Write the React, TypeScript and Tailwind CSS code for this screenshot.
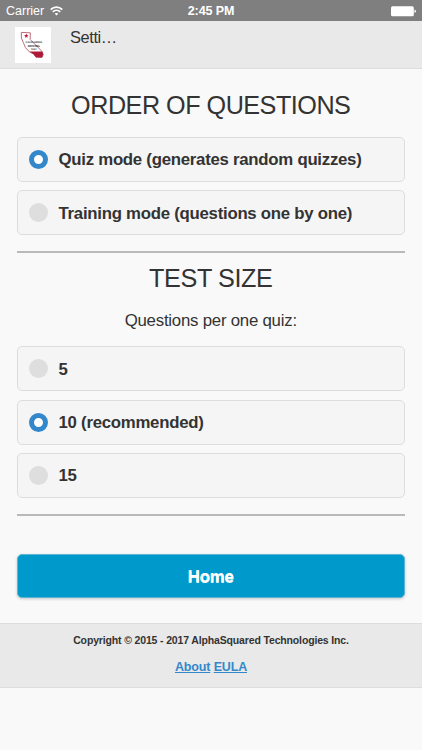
import React, { useState } from "react";

interface OptionProps {
  label: string;
  checked: boolean;
  onSelect: () => void;
}

function Option({ label, checked, onSelect }: OptionProps) {
  return (
    <button
      type="button"
      role="radio"
      aria-checked={checked}
      onClick={onSelect}
      className="flex h-[45px] w-full items-center gap-[11px] rounded-[5px] border border-[#dddddd] bg-[#f5f5f5] pl-[11px] text-left text-[16.8px] font-bold tracking-[-0.26px] whitespace-nowrap"
    >
      {checked ? (
        <span className="size-[19px] shrink-0 rounded-full border-[5.5px] border-[#3388cc] bg-white" />
      ) : (
        <span className="size-[19px] shrink-0 rounded-full bg-[#dedede]" />
      )}
      <span className="pt-px">{label}</span>
    </button>
  );
}

function StatusBar() {
  return (
    <div className="grid h-[21px] grid-cols-3 items-center bg-[#7f7f7f] text-[12.5px] text-white">
      <div className="flex items-center gap-[6px] pt-[2px] pl-[6px]">
        <span>Carrier</span>
        <svg className="-mt-[2px]" width="13" height="10" viewBox="0 0 13 10" fill="none" stroke="white" strokeWidth="1.8">
          <path d="M0.7 3.6C4 0.4 9 0.4 12.3 3.6" />
          <path d="M2.8 5.8C4.9 3.8 8.1 3.8 10.2 5.8" />
          <path d="M6.5 9.6L4.6 7.6C5.7 6.7 7.3 6.7 8.4 7.6Z" fill="white" stroke="none" />
        </svg>
      </div>
      <div className="pt-[2px] text-center font-bold tracking-[-0.1px]">2:45 PM</div>
      <div className="flex justify-end pt-px pr-[6px]">
        <svg width="25" height="11" viewBox="0 0 25 11">
          <rect x="0" y="0.3" width="22.8" height="10" rx="1.5" fill="white" />
          <path d="M23.5 3.5Q25 4 25 5.3T23.5 7.1Z" fill="white" />
        </svg>
      </div>
    </div>
  );
}

function Logo() {
  return (
    <svg className="bg-white" width="36" height="36" viewBox="0 0 36 36">
      <path
        d="M6.3 5.4L15.3 5.8L15.2 12.5L27 24.4L28.2 27.4L27 30.4L21 30.2L18.5 27L14.5 25L10.5 20.7L8.2 15.3L6.4 11Z"
        fill="white"
        stroke="#b65d6b"
        strokeWidth="0.9"
      />
      <path d="M14.5 24.6H27.2L28.2 27.4L27 30.4L21 30.2L18.5 27Z" fill="#b01838" />
      <path d="M11.3 6.4L11.9 8L13.5 8.1L12.3 9.2L12.7 10.8L11.3 9.9L9.9 10.8L10.3 9.2L9.1 8.1L10.7 8Z" fill="#c51c3d" />
      <g fill="#222222" fontWeight="700" textAnchor="middle" textRendering="geometricPrecision">
        <text x="18.8" y="16.4" fontSize="2.7">CALIFORNIA</text>
        <text x="18.8" y="19.7" fontSize="2.9">DRIVING</text>
        <text x="18.8" y="22.8" fontSize="2.3">TEST</text>
      </g>
    </svg>
  );
}

export default function App() {
  const [mode, setMode] = useState("quiz");
  const [size, setSize] = useState(10);

  return (
    <div className="min-h-[750px] bg-[#f9f9f9] font-['Liberation_Sans',Arial,sans-serif] text-[#333333]">
      <StatusBar />
      <header className="flex h-[48px] border-b border-[#dddddd] bg-[#e9e9e9] pt-[6px] pl-[15px]">
        <Logo />
        <h1 className="ml-[19px] text-[16.4px] leading-[21px] tracking-[-0.4px]">Setti…</h1>
      </header>

      <main className="flex flex-col pt-[20px] pr-[17px] pl-[16.5px]">
        <h2 className="text-center text-[25.2px] leading-[32px] tracking-[-0.5px] whitespace-nowrap">ORDER OF QUESTIONS</h2>
        <div role="radiogroup" className="mt-[16px] flex flex-col gap-[8.4px]">
          <Option
            label="Quiz mode (generates random quizzes)"
            checked={mode === "quiz"}
            onSelect={() => setMode("quiz")}
          />
          <Option
            label="Training mode (questions one by one)"
            checked={mode === "training"}
            onSelect={() => setMode("training")}
          />
        </div>
        <hr className="mt-[15.7px] h-[2px] border-0 bg-[#b9b9b9]" />

        <h2 className="mt-[8.9px] text-center text-[25.2px] leading-[32px] tracking-[-0.4px]">TEST SIZE</h2>
        <p className="mt-[16px] text-center text-[16.8px] leading-[22px] tracking-[-0.22px]">Questions per one quiz:</p>
        <div role="radiogroup" className="mt-[14.2px] flex flex-col gap-[8.4px]">
          <Option label="5" checked={size === 5} onSelect={() => setSize(5)} />
          <Option label="10 (recommended)" checked={size === 10} onSelect={() => setSize(10)} />
          <Option label="15" checked={size === 15} onSelect={() => setSize(15)} />
        </div>
        <hr className="mt-[16px] h-[2px] border-0 bg-[#b9b9b9]" />

        <button
          type="button"
          className="mt-[38px] h-[44px] w-full rounded-[5px] border border-[#5fb4d5] bg-[#0099cc] pt-px text-[16.8px] font-bold tracking-[-0.1px] text-white shadow-[0_1px_3px_rgba(0,0,0,0.2)] [text-shadow:0_1px_0_#f3f3f3]"
        >
          Home
        </button>
      </main>

      <footer className="mt-[25px] h-[65px] border-y border-[#dddddd] bg-[#e9e9e9] pt-[8.5px] text-center font-bold">
        <p className="text-[10.5px] leading-[16px] tracking-[-0.15px]">Copyright © 2015 - 2017 AlphaSquared Technologies Inc.</p>
        <p className="mt-[10px] text-[12.5px] leading-[18px] tracking-[-0.15px] text-[#3388cc]">
          <a href="#about" className="underline">About</a>{" "}
          <a href="#eula" className="underline">EULA</a>
        </p>
      </footer>
    </div>
  );
}
